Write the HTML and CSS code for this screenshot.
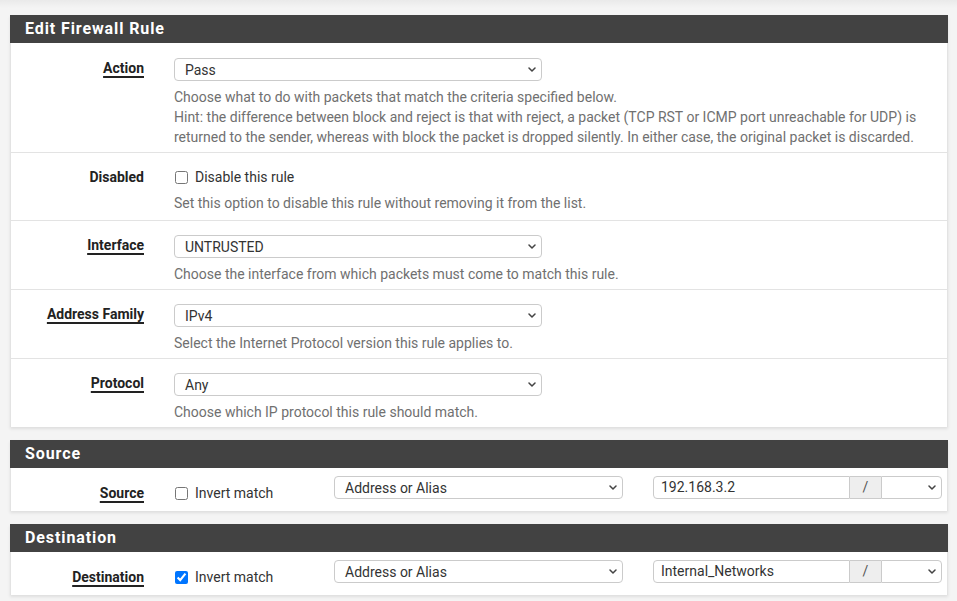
FILE: index.html
```html
<!DOCTYPE html>
<html lang="en">
<head>
<meta charset="utf-8">
<title>Edit Firewall Rule</title>
<link rel="stylesheet" href="styles.css">
</head>
<body>
<div class="page">
  <section class="panel">
    <h2 class="panel-head">Edit Firewall Rule</h2>
    <div class="panel-body">
      <div class="row">
        <div class="label"><span class="u">Action</span></div>
        <div class="control">
          <div class="select w368"><span>Pass</span><svg class="chev" width="8" height="5" viewBox="0 0 8 5"><path d="M1 1l3 3 3-3"/></svg></div>
          <p class="help">Choose what to do with packets that match the criteria specified below.<br>Hint: the difference between block and reject is that with reject, a packet (TCP RST or ICMP port unreachable for UDP) is<br>returned to the sender, whereas with block the packet is dropped silently. In either case, the original packet is discarded.</p>
        </div>
      </div>
      <div class="row chk">
        <div class="label">Disabled</div>
        <div class="control">
          <label class="check-line"><input type="checkbox" class="cb"><span>Disable this rule</span></label>
          <p class="help">Set this option to disable this rule without removing it from the list.</p>
        </div>
      </div>
      <div class="row">
        <div class="label"><span class="u">Interface</span></div>
        <div class="control">
          <div class="select w368"><span>UNTRUSTED</span><svg class="chev" width="8" height="5" viewBox="0 0 8 5"><path d="M1 1l3 3 3-3"/></svg></div>
          <p class="help">Choose the interface from which packets must come to match this rule.</p>
        </div>
      </div>
      <div class="row">
        <div class="label"><span class="u">Address Family</span></div>
        <div class="control">
          <div class="select w368"><span>IPv4</span><svg class="chev" width="8" height="5" viewBox="0 0 8 5"><path d="M1 1l3 3 3-3"/></svg></div>
          <p class="help">Select the Internet Protocol version this rule applies to.</p>
        </div>
      </div>
      <div class="row">
        <div class="label"><span class="u">Protocol</span></div>
        <div class="control">
          <div class="select w368"><span>Any</span><svg class="chev" width="8" height="5" viewBox="0 0 8 5"><path d="M1 1l3 3 3-3"/></svg></div>
          <p class="help">Choose which IP protocol this rule should match.</p>
        </div>
      </div>
    </div>
  </section>

  <section class="panel">
    <h2 class="panel-head">Source</h2>
    <div class="panel-body">
      <div class="addr-row">
        <div class="label top15"><span class="u">Source</span></div>
        <div class="inv-col">
          <label class="check-line"><input type="checkbox" class="cb"><span>Invert match</span></label>
        </div>
        <div class="sel-col">
          <div class="select"><span>Address or Alias</span><svg class="chev" width="8" height="5" viewBox="0 0 8 5"><path d="M1 1l3 3 3-3"/></svg></div>
        </div>
        <div class="group">
          <div class="g-input">192.168.3.2</div>
          <div class="g-addon">/</div>
          <div class="g-select"><svg class="chev" width="8" height="5" viewBox="0 0 8 5"><path d="M1 1l3 3 3-3"/></svg></div>
        </div>
      </div>
    </div>
  </section>

  <section class="panel">
    <h2 class="panel-head">Destination</h2>
    <div class="panel-body">
      <div class="addr-row">
        <div class="label top15"><span class="u">Destination</span></div>
        <div class="inv-col">
          <label class="check-line"><input type="checkbox" class="cb" checked><span>Invert match</span></label>
        </div>
        <div class="sel-col">
          <div class="select"><span>Address or Alias</span><svg class="chev" width="8" height="5" viewBox="0 0 8 5"><path d="M1 1l3 3 3-3"/></svg></div>
        </div>
        <div class="group">
          <div class="g-input">Internal_Networks</div>
          <div class="g-addon">/</div>
          <div class="g-select"><svg class="chev" width="8" height="5" viewBox="0 0 8 5"><path d="M1 1l3 3 3-3"/></svg></div>
        </div>
      </div>
    </div>
  </section>
</div>
</body>
</html>
```
FILE: styles.css
```css
html, body {
  margin: 0;
  padding: 0;
}
body {
  background: #f4f4f4;
  font-family: Roboto, "Liberation Sans", Arial, sans-serif;
  font-size: 14px;
  color: #333;
}
.page {
  padding: 15px 9px 1px 10px;
  min-height: 601px;
  box-sizing: border-box;
  background: linear-gradient(rgba(0,0,0,0.045), rgba(0,0,0,0)) top left / 100% 8px no-repeat, #f4f4f4;
}
.panel {
  background: #fff;
  margin-bottom: 13px;
  box-shadow: 0 2px 3px rgba(0,0,0,0.09);
}
.panel-head {
  margin: 0;
  height: 28px;
  line-height: 28px;
  background: #424242;
  color: #fff;
  font-size: 16px;
  font-weight: 700;
  letter-spacing: 0.9px;
  padding-left: 15px;
}
.panel-body {
  border-left: 1px solid #e3e3e3;
  border-right: 1px solid #e3e3e3;
}
.row {
  display: flex;
  border-top: 1px solid #e3e3e3;
  padding: 14px 0 5px;
}
.row:first-child {
  border-top: 0;
  padding-top: 15px;
}
.row.chk {
  padding-bottom: 7px;
}
.label {
  width: 133px;
  flex: none;
  text-align: right;
  font-weight: 700;
  line-height: 20px;
  color: #222;
}
.u {
  text-decoration: underline;
  text-decoration-thickness: 1.5px;
  text-underline-offset: 3px;
}
.control {
  margin-left: 30px;
  flex: 1;
  padding-right: 6px;
}
.select {
  height: 23px;
  box-sizing: border-box;
  border: 1px solid #cbcbcb;
  border-radius: 4px;
  display: flex;
  align-items: center;
  justify-content: space-between;
  padding: 0 5px 0 10px;
  color: #333;
  background: #fff;
}
.w368 {
  width: 368px;
}
.chev path {
  fill: none;
  stroke: #444;
  stroke-width: 1.5;
  stroke-linecap: round;
  stroke-linejoin: round;
}
.help {
  margin: 6px 0 0;
  color: #707070;
  line-height: 20px;
  white-space: nowrap;
}
.check-line {
  display: flex;
  align-items: center;
  height: 20px;
  color: #333;
}
.cb {
  width: 13px;
  height: 13px;
  margin: 0 7px 0 1px;
}
.addr-row {
  display: flex;
  height: 43px;
}
.top15 {
  padding-top: 15px;
}
.inv-col {
  margin-left: 30px;
  width: 160px;
  flex: none;
  padding-top: 15px;
}
.sel-col {
  width: 289px;
  flex: none;
  padding-top: 8px;
}
.group {
  margin-left: 30px;
  width: 289px;
  display: flex;
  height: 23px;
  margin-top: 8px;
}
.g-input {
  width: 197px;
  box-sizing: border-box;
  border: 1px solid #cbcbcb;
  border-radius: 4px 0 0 4px;
  padding-left: 7px;
  line-height: 21px;
  color: #333;
}
.g-addon {
  width: 31px;
  box-sizing: border-box;
  border-top: 1px solid #cbcbcb;
  border-bottom: 1px solid #cbcbcb;
  background: #eee;
  text-align: center;
  line-height: 21px;
  color: #555;
}
.g-select {
  flex: 1;
  box-sizing: border-box;
  border: 1px solid #cbcbcb;
  border-radius: 0 4px 4px 0;
  display: flex;
  align-items: center;
  justify-content: flex-end;
  padding-right: 5px;
}
```
